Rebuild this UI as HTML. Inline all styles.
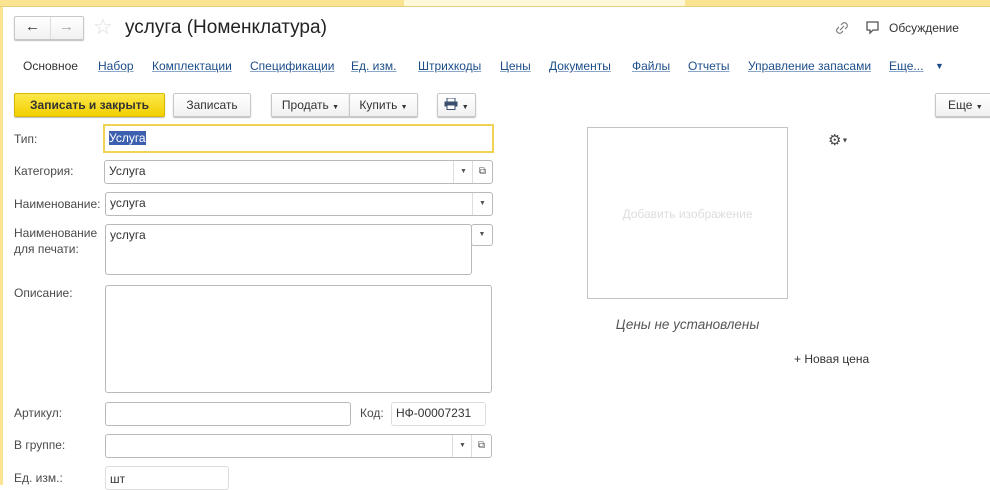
<!DOCTYPE html>
<html><head><meta charset="utf-8"><style>
*{box-sizing:border-box;margin:0;padding:0}
body{width:990px;height:485px;overflow:hidden;background:#fff;font-family:"Liberation Sans",sans-serif;font-size:12px;color:#3a3a3a;position:relative}
.a{position:absolute}
.btn{position:absolute;height:24px;border:1px solid #c8c8c8;border-radius:2px;background:linear-gradient(#fff,#f1f1f1);box-shadow:0 1px 1px #bbb;text-align:center;line-height:22px;font-size:12px;color:#333}
.f{position:absolute;border:1px solid #b9b9b9;border-radius:3px;background:#fff;font-size:12px;line-height:20px;padding-left:4px;color:#333}
.l{position:absolute;font-size:12px;color:#4a4a4a}
.dd{position:absolute;border-left:1px solid #ddd;width:20px;text-align:center;font-size:7px;color:#555;line-height:21px}
.tab{position:absolute;top:59px;font-size:12px;color:#1d4e89;text-decoration:underline;text-decoration-color:#8aa7c9}
</style></head><body>
<div class="a" style="left:0;top:0;width:990px;height:7px;background:#fbe491;border-bottom:1px solid #e6cf7a"></div>
<div class="a" style="left:404px;top:0;width:281px;height:6px;background:#fff8d8"></div>
<div class="a" style="left:0;top:7px;width:3px;height:478px;background:#fbe491"></div>

<div class="btn" style="left:14px;top:16px;width:70px;height:24px;line-height:20px;font-size:15px"><span style="position:absolute;left:10px;top:0">&#8592;</span><span style="position:absolute;left:35px;top:0;width:1px;height:22px;background:#ddd"></span><span style="position:absolute;left:44px;top:0;color:#aaa">&#8594;</span></div>
<div class="a" style="left:93px;top:14px;font-size:22px;color:#ddd">&#9734;</div>
<div class="a" style="left:125px;top:17px;font-size:19px;color:#222">услуга (Номенклатура)</div>
<svg class="a" style="left:834px;top:20px" width="16" height="16" viewBox="0 0 16 16"><path d="M7 5l2-2a3 3 0 0 1 4 4l-2 2M9 11l-2 2a3 3 0 0 1-4-4l2-2M6 10l4-4" stroke="#777" fill="none" stroke-width="1.1"/></svg>
<svg class="a" style="left:865px;top:20px" width="16" height="16" viewBox="0 0 16 16"><path d="M2 2h11v8H8l-3 3v-3H2z" stroke="#555" fill="none" stroke-width="1.3"/></svg>
<div class="a" style="left:889px;top:21px;font-size:12px;color:#333">Обсуждение</div>

<div class="a" style="left:23px;top:59px;color:#333">Основное</div>
<div class="tab" style="left:98px">Набор</div>
<div class="tab" style="left:152px">Комплектации</div>
<div class="tab" style="left:250px">Спецификации</div>
<div class="tab" style="left:351px">Ед. изм.</div>
<div class="tab" style="left:418px">Штрихкоды</div>
<div class="tab" style="left:500px">Цены</div>
<div class="tab" style="left:549px">Документы</div>
<div class="tab" style="left:632px">Файлы</div>
<div class="tab" style="left:688px">Отчеты</div>
<div class="tab" style="left:748px">Управление запасами</div>
<div class="tab" style="left:889px">Еще...</div>
<div class="a" style="left:935px;top:61px;font-size:9px;color:#1d4e89">&#9660;</div>

<div class="btn" style="left:14px;top:93px;width:151px;background:linear-gradient(#fde84a,#f2cf00);border-color:#d9b800;font-weight:bold;color:#333">Записать и закрыть</div>
<div class="btn" style="left:173px;top:93px;width:78px">Записать</div>
<div class="btn" style="left:271px;top:93px;width:79px">Продать <span style="font-size:7px">&#9660;</span></div>
<div class="btn" style="left:349px;top:93px;width:69px">Купить <span style="font-size:7px">&#9660;</span></div>
<div class="btn" style="left:437px;top:93px;width:39px"><svg width="14" height="12" viewBox="0 0 14 12" style="vertical-align:-1px"><rect x="3" y="0" width="8" height="4" fill="#fff" stroke="#3a4f6e"/><rect x="0.5" y="3.5" width="13" height="5" fill="#3a4f6e"/><rect x="3" y="7" width="8" height="4.5" fill="#fff" stroke="#3a4f6e"/></svg> <span style="font-size:7px">&#9660;</span></div>
<div class="btn" style="left:935px;top:93px;width:60px;text-align:left;padding-left:12px">Еще <span style="font-size:7px">&#9660;</span></div>

<div class="l" style="left:14px;top:132px">Тип:</div>
<div class="f" style="left:103px;top:124px;width:391px;height:29px;border:2px solid #f0d352;border-radius:0;line-height:25px"><span style="background:#3c5fb0;color:#fff">Услуга</span></div>

<div class="l" style="left:14px;top:164px">Категория:</div>
<div class="f" style="left:104px;top:160px;width:389px;height:24px">Услуга<div class="dd" style="left:348px;top:0;height:22px">&#9660;</div><div class="dd" style="left:367px;top:0;height:22px;font-size:10px">&#10697;</div></div>

<div class="l" style="left:14px;top:197px">Наименование:</div>
<div class="f" style="left:105px;top:192px;width:388px;height:24px">услуга<div class="dd" style="left:366px;top:0;height:22px">&#9660;</div></div>

<div class="l" style="left:14px;top:225px;line-height:16px">Наименование<br>для печати:</div>
<div class="f" style="left:105px;top:224px;width:367px;height:51px">услуга</div>
<div class="f" style="left:471px;top:224px;width:22px;height:22px;padding:0;text-align:center;font-size:7px;line-height:20px;color:#555">&#9660;</div>

<div class="l" style="left:14px;top:286px">Описание:</div>
<div class="f" style="left:105px;top:285px;width:387px;height:108px"></div>

<div class="l" style="left:14px;top:406px">Артикул:</div>
<div class="f" style="left:105px;top:402px;width:246px;height:24px"></div>
<div class="l" style="left:360px;top:406px">Код:</div>
<div class="f" style="left:391px;top:402px;width:95px;height:24px;border-color:#ddd">НФ-00007231</div>

<div class="l" style="left:14px;top:438px">В группе:</div>
<div class="f" style="left:105px;top:434px;width:387px;height:24px"><div class="dd" style="left:346px;top:0;height:22px">&#9660;</div><div class="dd" style="left:365px;top:0;height:22px;font-size:10px">&#10697;</div></div>

<div class="l" style="left:14px;top:471px">Ед. изм.:</div>
<div class="f" style="left:105px;top:466px;width:124px;height:24px;border-color:#ddd;padding-top:2px">шт</div>

<div class="a" style="left:587px;top:127px;width:201px;height:172px;border:1px solid #c4c4c4"></div>
<div class="a" style="left:587px;top:207px;width:201px;text-align:center;font-size:12px;color:#ddd">Добавить изображение</div>
<div class="a" style="left:828px;top:131px;font-size:15px;color:#444">&#9881;<span style="font-size:7px;vertical-align:middle">&#9660;</span></div>
<div class="a" style="left:587px;top:317px;width:201px;text-align:center;font-size:13.5px;font-style:italic;color:#555">Цены не установлены</div>
<div class="a" style="left:794px;top:352px;font-size:12px;color:#333">+ Новая цена</div>
</body></html>
